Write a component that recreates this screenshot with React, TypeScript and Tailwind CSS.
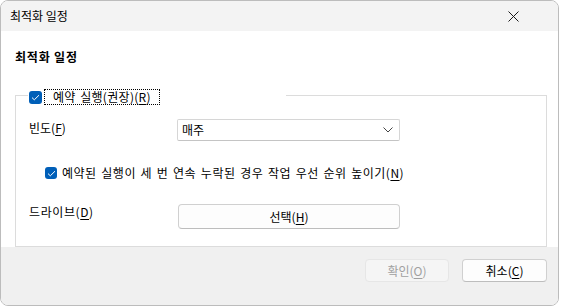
import React from "react"

function Check({ size }: { size: number }) {
  return (
    <span
      className="flex shrink-0 items-center justify-center rounded-[3px] bg-[#005fb8]"
      style={{ width: size, height: size }}
    >
      <svg width="9" height="7" viewBox="0 0 9 7" fill="none">
        <path d="M1 3.6 L3.3 5.8 L8 1.2" stroke="#ffffff" strokeWidth="1" />
      </svg>
    </span>
  )
}

function Key({ k }: { k: string }) {
  return (
    <>
      (<span className="underline underline-offset-2">{k}</span>)
    </>
  )
}

export default function App() {
  return (
    <div className="w-[562px] h-[308px] bg-white font-['Noto_Sans_CJK_KR','Noto_Sans',sans-serif] text-[12px] leading-[16px] text-black">
      <div className="flex h-[306px] w-[559px] flex-col overflow-hidden rounded-[8px] border border-[#bcbcbc]">
        {/* title bar */}
        <div className="flex h-[30px] shrink-0 items-center justify-between bg-[#f3f3f3] pl-[9px] pr-[39px]">
          <span>최적화 일정</span>
          <svg width="11" height="11" viewBox="0 0 11 11">
            <path d="M0.5 0.5 L10.5 10.5 M10.5 0.5 L0.5 10.5" stroke="#1a1a1a" strokeWidth="1" />
          </svg>
        </div>

        {/* body */}
        <div className="flex flex-1 flex-col bg-white pl-[14px] pr-[11px] pt-[18px]">
          <h2 className="font-semibold tracking-[0.8px]">최적화 일정</h2>
          <div className="mt-[30px] flex flex-1 flex-col border border-[#dcdcdc]">
            <div className="-mt-[7px] ml-[12px] flex h-[16px] w-[258px] items-center bg-white pl-[1px]">
              <Check size={13} />
              <span className="ml-[2px] border border-dotted border-black px-[8px] leading-[14px] tracking-[0.3px] [word-spacing:1.5px]">
                예약 실행(권장)<Key k="R" />
              </span>
            </div>

            <div className="mt-[14px] flex items-start pl-[13px]">
              <span className="w-[148px] pt-[1px]">빈도<Key k="F" /></span>
              <div className="flex h-[22px] w-[223px] items-center justify-between rounded-[2px] border border-[#d6d6d6] border-b-[#c4c4c4] bg-white pl-[4px] pr-[6px]">
                <span>매주</span>
                <svg width="10" height="6" viewBox="0 0 10 6" fill="none">
                  <path d="M0.5 0.5 L5 5 L9.5 0.5" stroke="#444" strokeWidth="1" />
                </svg>
              </div>
            </div>

            <div className="mt-[24px] ml-[29px] flex items-center gap-[5px]">
              <Check size={12} />
              <span className="tracking-[0.5px] [word-spacing:1.5px]">
                예약된 실행이 세 번 연속 누락된 경우 작업 우선 순위 높이기<Key k="N" />
              </span>
            </div>

            <div className="mt-[23px] flex items-start pl-[13px]">
              <span className="w-[149px] tracking-[0.6px]">드라이브<Key k="D" /></span>
              <button className="flex h-[25px] w-[222px] items-center justify-center rounded-[4px] border border-[#d0d0d0] border-b-[#bdbdbd] bg-[#fdfdfd]">
                선택<Key k="H" />
              </button>
            </div>
          </div>
        </div>

        {/* footer */}
        <div className="flex h-[58px] shrink-0 items-start justify-end gap-[13px] bg-[#f0f0f0] pr-[11px] pt-[12px]">
          <button className="flex h-[23px] w-[84px] items-center justify-center rounded-[4px] border border-[#e6e6e6] bg-[#f5f5f5] text-[#a0a0a0]">
            확인<Key k="O" />
          </button>
          <button className="flex h-[23px] w-[85px] items-center justify-center rounded-[4px] border border-[#d0d0d0] border-b-[#bdbdbd] bg-[#fdfdfd]">
            취소<Key k="C" />
          </button>
        </div>
      </div>
    </div>
  )
}
